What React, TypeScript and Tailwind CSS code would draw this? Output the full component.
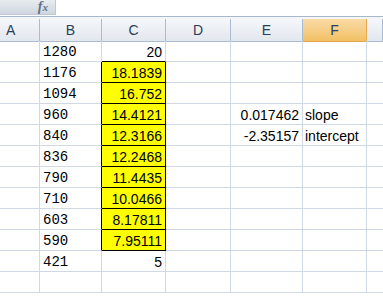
import React from "react";

const B = ["1280", "1176", "1094", "960", "840", "836", "790", "710", "603", "590", "421", ""];
const C = ["20", "18.1839", "16.752", "14.4121", "12.3166", "12.2468", "11.4435", "10.0466", "8.17811", "7.95111", "5", ""];
const E: Record<number, string> = { 3: "0.017462", 4: "-2.35157" };
const F: Record<number, string> = { 3: "slope", 4: "intercept" };

const cols = "grid grid-cols-[40px_62px_64px_65px_72px_64px_1fr]";

export default function App() {
  const sans = { fontFamily: '"Liberation Sans", Arial, sans-serif' };
  return (
    <div className="w-[383px] h-[302px] overflow-hidden bg-white" style={sans}>
      {/* formula bar */}
      <div className="h-[17px] flex border-b border-[#a7b6c9]">
        <div className="w-[56px] h-[15px] flex justify-end items-center pr-[7px] bg-gradient-to-b from-[#e8ecf1] to-[#cfd6df] border-r border-b border-[#bfc9d6]">
          <span
            className="text-[#5f718b] text-[14px] italic leading-[14px] font-bold"
            style={{ fontFamily: '"Liberation Serif", "Times New Roman", serif' }}
          >
            f<span className="text-[11px]">x</span>
          </span>
        </div>
        <div className="flex-1" />
      </div>
      <div className="h-[2px] bg-[#f4f6f9]" />
      {/* header */}
      <div className={`${cols} h-[22px] text-[14px] text-[#2c3e55]`}>
        {["A", "B", "C", "D", "E", "F", ""].map((h, i) => (
          <div
            key={i}
            className={
              h === "F"
                ? "flex items-center justify-center pt-[1px] border-r border-b border-[#e2a851] bg-gradient-to-b from-[#f9dba6] to-[#f2c062]"
                : `flex items-center pt-[1px] border-r border-b border-[#a9bcd2] bg-gradient-to-b from-[#f5f7fa] to-[#e2e7ee] ${i === 0 ? "justify-start pl-[6px]" : "justify-center"}`
            }
          >
            {h}
          </div>
        ))}
      </div>
      {/* rows */}
      {B.map((b, r) => {
        const yellow = r >= 1 && r <= 9;
        const aboveYellow = r === 0;
        return (
          <div key={r} className={`${cols} h-[21px] text-[14px] text-black leading-[16px]`}>
            <div className="border-r border-b border-[#d0d7e5]" />
            <div
              className={`border-b border-[#d0d7e5] border-r pl-[3px] pt-[3px] ${yellow ? "border-r-black" : ""}`}
              style={{ fontFamily: '"Liberation Mono", "Courier New", monospace' }}
            >
              {b}
            </div>
            <div
              className={`border-r border-b text-right pr-[3px] pt-[3px] ${
                yellow ? "bg-[#ffff00] border-black" : aboveYellow ? "border-r-[#d0d7e5] border-b-black" : "border-[#d0d7e5]"
              }`}
            >
              {C[r]}
            </div>
            <div className="border-r border-b border-[#d0d7e5]" />
            <div className="border-r border-b border-[#d0d7e5] text-right pr-[3px] pt-[3px]">{E[r] ?? ""}</div>
            <div className="border-r border-b border-[#d0d7e5] pl-[2px] pt-[3px] whitespace-nowrap overflow-visible">{F[r] ?? ""}</div>
            <div className="border-b border-[#d0d7e5]" />
          </div>
        );
      })}
    </div>
  );
}
